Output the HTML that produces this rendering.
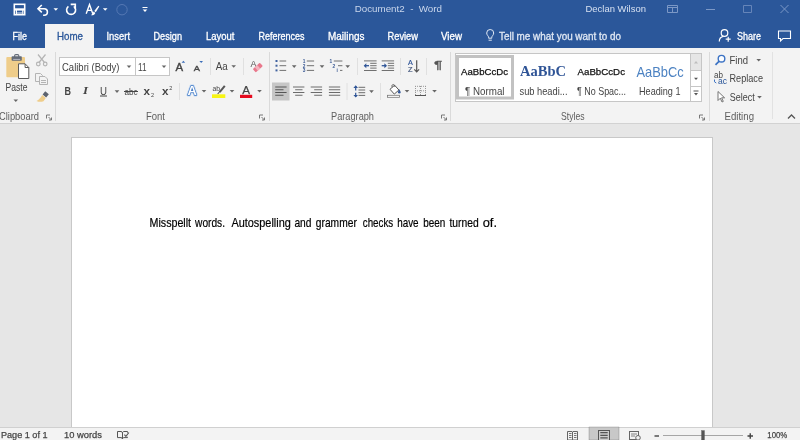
<!DOCTYPE html>
<html lang="en">
<head>
<meta charset="utf-8">
<title>Document2 - Word</title>
<style>
html,body{margin:0;padding:0;}
body{width:800px;height:440px;overflow:hidden;position:relative;background:#e6e6e6;font-family:"Liberation Sans",sans-serif;}
#titlebar{position:absolute;left:0;top:0;width:800px;height:48px;background:#2b579a;}
#hometab{position:absolute;left:45px;top:24px;width:49px;height:24px;background:#f3f3f3;}
#ribbon{position:absolute;left:0;top:48px;width:800px;height:75px;background:#f3f3f3;border-bottom:1px solid #d2d2d2;}
#docarea{position:absolute;left:0;top:124px;width:800px;height:303px;background:#e6e6e6;}
#page{position:absolute;left:71px;top:137px;width:640px;height:300px;background:#fff;border:1px solid #c8c8c8;border-bottom:none;}
#statusbar{position:absolute;left:0;top:427px;width:800px;height:13px;background:#f3f3f3;border-top:1px solid #d0d0d0;box-sizing:border-box;}
#ov{position:absolute;left:0;top:0;will-change:transform;}
svg text{font-family:"Liberation Sans",sans-serif;}
svg text.serif{font-family:"Liberation Serif",serif;}
.sep{stroke:#dadada;stroke-width:1;}
.t11{font-size:11px;}
</style>
</head>
<body>
<div id="titlebar"></div>
<div id="hometab"></div>
<div id="ribbon"></div>
<div id="docarea"></div>
<div id="page"></div>
<div id="statusbar"></div>
<svg id="ov" width="800" height="440" viewBox="0 0 800 440">
<defs>
<path id="dd" d="M0.200 0h4.600l-2.300 2.600z"/>
<g id="launcher" fill="none" stroke="#777" stroke-width="1"><path d="M0.5 4V0.5H4"/><path d="M2.5 2.5L5.5 5.5M5.5 3V5.5H3"/></g>
</defs>
<g id="g-title">
<!-- save icon -->
<g>
<rect x="14.300" y="4.300" width="10.400" height="10.400" fill="none" stroke="#fff" stroke-width="1.600"/>
<rect x="14" y="8.300" width="11" height="2.300" fill="#fff"/>
<path d="M16.400 10v4.500M22.800 10v4.500" stroke="#fff" stroke-width="1.200"/>
<rect x="17" y="12" width="5.200" height="2.200" fill="#fff" opacity=".450"/>
</g>
<!-- undo -->
<g fill="none" stroke="#fff" stroke-width="1.600" transform="translate(0 .7)">
<path d="M41.800 4.300L38 8l3.800 3.700"/>
<path d="M38.500 8h5.600a3.300 3.300 0 0 1 0 6.600h-1"/>
</g>
<use href="#dd" x="53.300" y="8.200" fill="#fff"/>
<!-- redo -->
<g fill="none" stroke="#fff" stroke-width="1.600" transform="translate(.2 .5)">
<path d="M68.200 5.800a4.500 4.500 0 1 0 5.400 0"/>
<path d="M70.500 3.900h4.600v4.600"/>
</g>
<!-- A brush -->
<g fill="none" stroke="#fff" stroke-width="1.400">
<path d="M86.200 13.700L89.500 4.600L92.800 13.700M87.500 10.400h4"/>
</g>
<path d="M98.300 5.800l-4 5.200 1.500 1.200 3.500-5.600z" fill="#fff"/>
<path d="M93.700 11.600l1.600 1.300c-.5 1.700-2 2.500-4.300 2.300 1.400-.9 1.800-2.300 2.700-3.600z" fill="#fff"/>
<use href="#dd" x="102.700" y="8.200" fill="#fff"/>
<circle cx="122" cy="9.700" r="5.200" fill="none" stroke="#5578b3" stroke-width="1"/>
<path d="M142.5 7.5h5" stroke="#fff" stroke-width="1" fill="none"/>
<use href="#dd" x="142.5" y="9.5" fill="#fff"/>
<text y="12.300" font-size="9.800" fill="#c9d6ec" xml:space="preserve"><tspan x="354.700" textLength="50" lengthAdjust="spacingAndGlyphs">Document2</tspan><tspan x="407.600"> - </tspan><tspan x="418.700" textLength="23.300" lengthAdjust="spacingAndGlyphs">Word</tspan></text>
<text x="585.500" y="12.300" font-size="9.800" fill="#d6e0f1" textLength="60.400" lengthAdjust="spacingAndGlyphs">Declan Wilson</text>
<!-- ribbon display -->
<g fill="none" stroke="#7c98c6" stroke-width="1">
<path d="M667.5 5.5h10v7h-10z M667.5 7.5h10 M672.5 7.5v5"/>
</g>
<path d="M706 9.5h9" stroke="#7c98c6" stroke-width="1"/>
<path d="M743.5 5.5h8v7h-8z" fill="none" stroke="#6685b9" stroke-width="1"/>
<path d="M780.5 5L788.5 13M788.5 5L780.5 13" fill="none" stroke="#7c98c6" stroke-width="1"/>
</g>
<g id="g-tabs" font-size="10.200" stroke-width=".300">
<text x="12.5" y="39.600" fill="#fff" stroke="#fff" textLength="14.5" lengthAdjust="spacingAndGlyphs">File</text>
<text x="57" y="39.600" fill="#2b579a" stroke="#2b579a" textLength="26" lengthAdjust="spacingAndGlyphs">Home</text>
<text x="106.5" y="39.600" fill="#fff" stroke="#fff" textLength="23.5" lengthAdjust="spacingAndGlyphs">Insert</text>
<text x="153.5" y="39.600" fill="#fff" stroke="#fff" textLength="28.5" lengthAdjust="spacingAndGlyphs">Design</text>
<text x="206" y="39.600" fill="#fff" stroke="#fff" textLength="28.5" lengthAdjust="spacingAndGlyphs">Layout</text>
<text x="258.5" y="39.600" fill="#fff" stroke="#fff" textLength="46" lengthAdjust="spacingAndGlyphs">References</text>
<text x="328" y="39.600" fill="#fff" stroke="#fff" textLength="36.5" lengthAdjust="spacingAndGlyphs">Mailings</text>
<text x="387.5" y="39.600" fill="#fff" stroke="#fff" textLength="30.5" lengthAdjust="spacingAndGlyphs">Review</text>
<text x="441" y="39.600" fill="#fff" stroke="#fff" textLength="21" lengthAdjust="spacingAndGlyphs">View</text>
<!-- bulb -->
<g fill="none" stroke="#e3eaf5" stroke-width="1">
<path d="M488.600 38.200v-1c0-1.200-1.900-2.100-1.900-4.200a3.500 3.500 0 0 1 7 0c0 2.100-1.900 3-1.900 4.200v1z"/>
<path d="M488.600 40.200h3.200"/>
</g>
<text x="499" y="39.600" fill="#dfe7f3" stroke="#dfe7f3" textLength="122" lengthAdjust="spacingAndGlyphs">Tell me what you want to do</text>
<!-- share -->
<g fill="none" stroke="#fff" stroke-width="1.200">
<circle cx="724.500" cy="33" r="3.300"/>
<path d="M719.300 41.500c0-3 1.600-4.800 4.200-5.200"/>
<path d="M725.700 39.200h5M728.200 36.700v5"/>
</g>
<text x="737" y="39.600" fill="#fff" stroke="#fff" textLength="24" lengthAdjust="spacingAndGlyphs">Share</text>
<path d="M778.500 31h12v7.500h-7.500l-2.500 2.500v-2.500h-2z" fill="none" stroke="#fff" stroke-width="1.1"/>
</g>
<g id="g-ribbon" font-size="10.300">
<!-- group separators -->
<path class="sep" d="M55.500 52v69M269.500 52v69M450.500 52v69M709.500 52v69"/>
<path d="M772.500 52v67" stroke="#e2e2e2" stroke-width="1"/>
<!-- small separators -->
<path stroke="#e0e0e0" stroke-width="1" d="M210.500 58v17M243.500 58v17M179.500 83v17M357.500 58v17M400.500 58v17M426.500 58v17M347 83v17M380.500 83v17"/>
<!-- group labels -->
<g fill="#5e5e5e">
<text x="-1" y="119.500" textLength="40" lengthAdjust="spacingAndGlyphs">Clipboard</text>
<text x="146" y="119.500" textLength="19" lengthAdjust="spacingAndGlyphs">Font</text>
<text x="331" y="119.500" textLength="43" lengthAdjust="spacingAndGlyphs">Paragraph</text>
<text x="561" y="119.500" textLength="23.500" lengthAdjust="spacingAndGlyphs">Styles</text>
<text x="724.500" y="119.500" textLength="29.500" lengthAdjust="spacingAndGlyphs">Editing</text>
</g>
<use href="#launcher" x="46" y="114.500"/>
<use href="#launcher" x="259" y="114.500"/>
<use href="#launcher" x="441" y="114.500"/>
<use href="#launcher" x="699" y="114.500"/>
<path d="M788 118.500l3.500-3.500l3.500 3.500" fill="none" stroke="#555" stroke-width="1.300"/>

<!-- CLIPBOARD -->
<g id="paste">
<rect x="6.300" y="57" width="18.700" height="20.300" rx="1" fill="#efcd8a"/>
<rect x="11.600" y="56.200" width="10.200" height="4.600" rx=".800" fill="#646b78"/>
<rect x="14.600" y="54.600" width="4.200" height="3" rx="1.200" fill="none" stroke="#646b78" stroke-width="1.100"/>
<path d="M13.200 59.400h7" stroke="#c9ccd3" stroke-width=".800"/>
<path d="M18.500 63.800h6.600l3.700 3.700v11h-10.300z" fill="#fff" stroke="#5a5a5a" stroke-width="1"/>
<path d="M25.100 63.800v3.700h3.700" fill="none" stroke="#5a5a5a" stroke-width="1"/>
</g>
<text x="5.500" y="91" fill="#444" textLength="22" lengthAdjust="spacingAndGlyphs">Paste</text>
<use href="#dd" x="13.300" y="99.400" fill="#666"/>
<!-- scissors (disabled) -->
<g fill="none" stroke="#b4b4b4" stroke-width="1.200">
<path d="M38 54.500l6.500 8M45.500 54.500l-6.500 8"/>
<circle cx="38.300" cy="64" r="1.800"/><circle cx="45.200" cy="64" r="1.800"/>
</g>
<!-- copy (disabled) -->
<g fill="#f3f3f3" stroke="#b4b4b4" stroke-width="1">
<path d="M35.500 73.500h5l2 2v6h-7z"/>
<path d="M39.500 76.500h5.500l2.500 2.500v5.500h-8z"/>
<path d="M41 80.500h5M41 82.500h5" />
</g>
<!-- format painter -->
<g>
<path d="M45.200 91.300l3.600 2.900-2.600 3.200-3.600-2.900z" fill="#5d636e"/>
<path d="M42.200 95l3.600 2.900-2.300 3.300c-2.200 .9-4.700 .9-7-.2 2.400-1.200 4.200-3.200 5.700-6z" fill="#efcd8a"/>
</g>

<!-- FONT -->
<rect x="59.500" y="57.500" width="76" height="18" fill="#fff" stroke="#c6c6c6"/>
<rect x="135.500" y="57.500" width="34" height="18" fill="#fff" stroke="#c6c6c6"/>
<text x="62" y="70.500" fill="#444" textLength="57.500" lengthAdjust="spacingAndGlyphs">Calibri (Body)</text>
<use href="#dd" x="126.500" y="65.500" fill="#666"/>
<text x="138" y="70.500" fill="#444" textLength="8.500" lengthAdjust="spacingAndGlyphs">11</text>
<use href="#dd" x="161.500" y="65.500" fill="#666"/>
<!-- grow / shrink -->
<text x="175.400" y="70.700" font-size="10.300" fill="#444" stroke="#444" stroke-width=".350" textLength="7.600" lengthAdjust="spacingAndGlyphs">A</text>
<path d="M181.600 62.700h3.600l-1.800-1.900z" fill="#3b6db8"/>
<text x="193.800" y="70.700" font-size="7.800" fill="#444" stroke="#444" stroke-width=".350" textLength="6.200" lengthAdjust="spacingAndGlyphs">A</text>
<path d="M199.400 61h3.600l-1.800 1.900z" fill="#3b6db8"/>
<text x="215.700" y="69.800" font-size="10.500" fill="#444" textLength="12" lengthAdjust="spacingAndGlyphs">Aa</text>
<use href="#dd" x="231.200" y="65.200" fill="#666"/>
<!-- clear formatting -->
<text x="250.600" y="67.300" font-size="9.200" fill="#555" textLength="6" lengthAdjust="spacingAndGlyphs">A</text>
<g transform="rotate(-42 257.800 67.600)">
<rect x="253" y="65.300" width="9.600" height="4.600" rx="1" fill="#e9788c"/>
<rect x="255.800" y="65.300" width="3.200" height="4.600" fill="#f3b3be"/>
</g>
<!-- row 2 -->
<text x="64.500" y="95" font-size="10.500" font-weight="bold" fill="#444" textLength="6.500" lengthAdjust="spacingAndGlyphs">B</text>
<text x="83" y="94.300" font-size="11" font-style="italic" font-weight="bold" class="serif" fill="#444" textLength="5" lengthAdjust="spacingAndGlyphs">I</text>
<text x="100" y="94.500" font-size="10.500" fill="#444" textLength="7" lengthAdjust="spacingAndGlyphs">U</text>
<path d="M100 96h7" stroke="#444" stroke-width="1"/>
<use href="#dd" x="114.500" y="90.300" fill="#666"/>
<text x="124.500" y="94.500" font-size="9.500" fill="#444" textLength="13" lengthAdjust="spacingAndGlyphs">abc</text>
<path d="M124 91.500h14" stroke="#444" stroke-width="1"/>
<text x="143.500" y="94.500" font-size="11" font-weight="bold" fill="#444" textLength="6.500" lengthAdjust="spacingAndGlyphs">x</text>
<text x="151" y="96.500" font-size="5.500" fill="#444">2</text>
<text x="162" y="94.500" font-size="11" font-weight="bold" fill="#444" textLength="6.500" lengthAdjust="spacingAndGlyphs">x</text>
<text x="169.300" y="90" font-size="5.500" fill="#444">2</text>
<!-- text effects A -->
<text x="187.400" y="95.400" font-size="12.800" font-weight="bold" fill="#fff" stroke="#c3d8f2" stroke-width="2.800" paint-order="stroke" stroke-linejoin="round">A</text>
<text x="187.400" y="95.400" font-size="12.800" font-weight="bold" fill="#fff" stroke="#3f78c4" stroke-width="1.300" paint-order="stroke" stroke-linejoin="round">A</text>
<use href="#dd" x="201.500" y="90" fill="#666"/>
<!-- highlight -->
<text x="212.500" y="90.700" font-size="7.500" fill="#444" textLength="7.500" lengthAdjust="spacingAndGlyphs">ab</text>
<path d="M224.800 85.800l-5.200 6.400" stroke="#555" stroke-width="2" fill="none"/>
<path d="M219.900 91.200l-2.300 2.600 1-.2z" fill="#555" stroke="#555" stroke-width=".600"/>
<rect x="212" y="94.300" width="13.300" height="3.700" fill="#f7f414"/>
<use href="#dd" x="229.500" y="90" fill="#666"/>
<!-- font colour -->
<text x="242.200" y="94.100" font-size="10.500" fill="#444" stroke="#444" stroke-width=".250" textLength="7.800" lengthAdjust="spacingAndGlyphs">A</text>
<rect x="240" y="94.800" width="12.200" height="3.200" fill="#e60a1e"/>
<use href="#dd" x="257" y="90" fill="#666"/>

<!-- PARAGRAPH row1 -->
<g id="bullets">
<rect x="275.500" y="60" width="2" height="2" fill="#40629f"/><rect x="275.500" y="64.700" width="2" height="2" fill="#40629f"/><rect x="275.500" y="69.400" width="2" height="2" fill="#40629f"/>
<path d="M279.500 61h6.700M279.500 65.700h6.700M279.500 70.400h6.700" stroke="#707070" stroke-width="1"/>
</g>
<use href="#dd" x="291.700" y="65.300" fill="#666"/>
<g id="numbering">
<text x="302.800" y="62.800" font-size="4.800" font-weight="bold" fill="#3b5a94">1</text>
<text x="302.800" y="67.500" font-size="4.800" font-weight="bold" fill="#3b5a94">2</text>
<text x="302.800" y="72.200" font-size="4.800" font-weight="bold" fill="#3b5a94">3</text>
<path d="M306.800 61h7.300M306.800 65.700h7.300M306.800 70.400h7.300" stroke="#707070" stroke-width="1"/>
</g>
<use href="#dd" x="319.500" y="65.300" fill="#666"/>
<g id="multilevel">
<text x="329.500" y="62.800" font-size="4.800" font-weight="bold" fill="#3b5a94">1</text>
<text x="332.600" y="67.500" font-size="4.800" font-weight="bold" fill="#3b5a94">2</text>
<text x="336.600" y="72.200" font-size="4.800" font-weight="bold" fill="#3b5a94">i</text>
<path d="M333.800 61h8.600M338 65.700h4.400M340 70.400h2.400" stroke="#707070" stroke-width="1"/>
</g>
<use href="#dd" x="345.200" y="65.300" fill="#666"/>
<g id="outdent">
<path d="M364 60.900h12.600M370.200 63.300h6.400M370.200 65.700h6.400M370.200 68.100h6.400M364 70.500h12.600" stroke="#707070" stroke-width="1"/>
<path d="M369 65.700h-4.300" stroke="#2f5597" stroke-width="1.300" fill="none"/>
<path d="M363.700 65.700l2.600-2.500v5z" fill="#2f5597"/>
</g>
<g id="indent">
<path d="M381.700 60.900h12.400M387.800 63.300h6.300M387.800 65.700h6.300M387.800 68.100h6.300M381.700 70.500h12.400" stroke="#707070" stroke-width="1"/>
<path d="M381.700 65.700h4.300" stroke="#2f5597" stroke-width="1.300" fill="none"/>
<path d="M387 65.700l-2.600-2.500v5z" fill="#2f5597"/>
</g>
<g id="sort">
<text x="408" y="65.400" font-size="7.200" fill="#2f5597" stroke="#2f5597" stroke-width=".200" textLength="4.800" lengthAdjust="spacingAndGlyphs">A</text>
<text x="408.100" y="71.900" font-size="6.800" fill="#44587f" stroke="#44587f" stroke-width=".200" textLength="4.500" lengthAdjust="spacingAndGlyphs">Z</text>
<path d="M416.700 60.200v11.400M414.300 69.300l2.400 2.500 2.400-2.500" stroke="#555" stroke-width="1.200" fill="none"/>
</g>
<text x="434" y="69.300" font-size="11.200" fill="#555" stroke="#555" stroke-width=".300" textLength="8.300" lengthAdjust="spacingAndGlyphs">¶</text>
<!-- row2 -->
<rect x="272" y="82.500" width="17.500" height="18" fill="#c6c6c6"/>
<path d="M275.200 87h11.400M275.200 89.750h8.300M275.200 92.500h11.400M275.200 95.250h8.300" stroke="#555" stroke-width="1.100"/>
<path d="M293 87h11.400M295.200 89.750h7.300M293 92.500h11.400M295.200 95.250h7.300" stroke="#6c6c6c" stroke-width="1"/>
<path d="M310.700 87h11.400M314.200 89.750h7.900M310.700 92.500h11.400M314.200 95.250h7.900" stroke="#6c6c6c" stroke-width="1"/>
<path d="M328.900 87h11.300M328.900 89.750h11.300M328.900 92.500h11.300M328.900 95.250h11.300" stroke="#6c6c6c" stroke-width="1"/>
<g id="linespacing">
<path d="M355.700 86v4.500M355.700 92.700v4.300" stroke="#2f5597" stroke-width="1.200" fill="none"/>
<path d="M355.700 85.300l2.300 2.600h-4.600zM355.700 97.500l2.300-2.600h-4.600z" fill="#2f5597"/>
<path d="M358.500 87.300h6.700M358.500 90h6.700M358.500 92.700h6.700M358.500 95.400h6.700" stroke="#6c6c6c" stroke-width="1"/>
</g>
<use href="#dd" x="369" y="90.300" fill="#666"/>
<g id="shading">
<path d="M390 89.300l4.600-4.100 4.300 4.800-4.600 4.100z" fill="#fff" stroke="#555" stroke-width="1"/>
<path d="M392.300 87.200c-.8-1.500-.2-2.600 .9-2.600s1.600 .9 1.600 2.300" fill="none" stroke="#555" stroke-width=".900"/>
<path d="M399.300 89.300c.9 1.300 1.300 2.300 1.300 3a1.300 1.300 0 0 1-2.600 0c0-.7 .5-1.700 1.300-3z" fill="#2f5597"/>
<rect x="387.500" y="95.300" width="12" height="2" fill="#fff" stroke="#777" stroke-width=".800"/>
</g>
<use href="#dd" x="404.500" y="90" fill="#666"/>
<g id="borders" stroke="#999" stroke-width="1" fill="none">
<path stroke-dasharray="1 1" d="M415 86.300h11M415 90.800h11M415.500 86v9.500M420.500 86v9.500M425.500 86v9.500"/>
<path d="M415 95.500h11" stroke="#555"/>
</g>
<use href="#dd" x="432" y="90" fill="#666"/>

<!-- STYLES -->
<rect x="455.500" y="53.500" width="246" height="48" fill="#fff" stroke="#c6c6c6"/>
<rect x="457.500" y="56.500" width="55" height="41.500" fill="none" stroke="#c2c2c2" stroke-width="3"/>
<text x="461" y="75" font-size="9.800" fill="#111" stroke="#111" stroke-width=".250" textLength="47" lengthAdjust="spacingAndGlyphs">AaBbCcDc</text>
<text x="465" y="94.500" fill="#444" textLength="39.500" lengthAdjust="spacingAndGlyphs">¶ Normal</text>
<text x="520" y="75.500" font-size="14.500" font-weight="bold" class="serif" fill="#2f5496" textLength="46" lengthAdjust="spacingAndGlyphs">AaBbC</text>
<text x="519.500" y="94.500" fill="#444" textLength="48" lengthAdjust="spacingAndGlyphs">sub headi...</text>
<text x="577.500" y="75" font-size="9.800" fill="#111" stroke="#111" stroke-width=".250" textLength="47.500" lengthAdjust="spacingAndGlyphs">AaBbCcDc</text>
<text x="577" y="94.500" fill="#444" textLength="49" lengthAdjust="spacingAndGlyphs">¶ No Spac...</text>
<text x="636.500" y="76.500" font-size="14.800" fill="#4c82c2" textLength="47.200" lengthAdjust="spacingAndGlyphs">AaBbCc</text>
<text x="639" y="94.500" fill="#444" textLength="41.500" lengthAdjust="spacingAndGlyphs">Heading 1</text>
<rect x="690.500" y="53.500" width="11" height="17" fill="#e6e6e6" stroke="#c6c6c6"/>
<rect x="690.500" y="70.500" width="11" height="16" fill="#fff" stroke="#c6c6c6"/>
<rect x="690.500" y="86.500" width="11" height="15" fill="#fff" stroke="#c6c6c6"/>
<path d="M694 63.500h4l-2-2.500z" fill="#bdbdbd"/>
<path d="M694 77.700h4l-2 2.400z" fill="#555"/>
<path d="M693.500 91h5" stroke="#555" stroke-width="1"/>
<path d="M694 93h4l-2 2.400z" fill="#555"/>

<!-- EDITING -->
<g fill="#fbfdff" stroke="#3b72c4" stroke-width="1.400">
<circle cx="721.500" cy="58.700" r="3.300"/>
<path d="M719.200 61.200l-3.700 3.700" stroke-width="1.700"/>
</g>
<text x="729.500" y="63.900" fill="#444" textLength="18.500" lengthAdjust="spacingAndGlyphs">Find</text>
<use href="#dd" x="756.200" y="59" fill="#666"/>
<g>
<text x="714" y="78" font-size="8.500" fill="#444" textLength="9" lengthAdjust="spacingAndGlyphs">ab</text>
<text x="718" y="84" font-size="8.500" fill="#2b579a" textLength="9" lengthAdjust="spacingAndGlyphs">ac</text>
<path d="M714.500 79.500v2.300l1.800 1.200" stroke="#3b72c4" stroke-width="1" fill="none"/>
</g>
<text x="729.500" y="82.400" fill="#444" textLength="33.500" lengthAdjust="spacingAndGlyphs">Replace</text>
<path d="M718 91.500v9l2.300-2.300 1.700 3.800 1.300-.600-1.700-3.600h3z" fill="#fff" stroke="#666" stroke-width=".900"/>
<text x="729.800" y="100.600" fill="#444" textLength="25" lengthAdjust="spacingAndGlyphs">Select</text>
<use href="#dd" x="757" y="96" fill="#666"/>
</g>
<g id="g-doc">
<text y="226.500" font-size="12.400" fill="#000" stroke="#000" stroke-width=".200"><tspan x="149.5" textLength="41.6" lengthAdjust="spacingAndGlyphs">Misspellt</tspan> <tspan x="195.1" textLength="29.9" lengthAdjust="spacingAndGlyphs">words.</tspan> <tspan x="231.4" textLength="59.4" lengthAdjust="spacingAndGlyphs">Autospelling</tspan> <tspan x="294.4" textLength="17.1" lengthAdjust="spacingAndGlyphs">and</tspan> <tspan x="315.8" textLength="41.0" lengthAdjust="spacingAndGlyphs">grammer</tspan> <tspan x="362.8" textLength="30.4" lengthAdjust="spacingAndGlyphs">checks</tspan> <tspan x="397.2" textLength="21.4" lengthAdjust="spacingAndGlyphs">have</tspan> <tspan x="423.3" textLength="22.1" lengthAdjust="spacingAndGlyphs">been</tspan> <tspan x="449.5" textLength="29.2" lengthAdjust="spacingAndGlyphs">turned</tspan> <tspan x="482.7" textLength="14.3" lengthAdjust="spacingAndGlyphs">of.</tspan></text>
</g>
<g id="g-status" font-size="9.500" fill="#444" stroke="#444" stroke-width=".250">
<text x="1" y="437.800" textLength="46.500" lengthAdjust="spacingAndGlyphs">Page 1 of 1</text>
<text x="64" y="437.800" textLength="38" lengthAdjust="spacingAndGlyphs">10 words</text>
<!-- proofing -->
<g fill="none" stroke="#555" stroke-width="1">
<path d="M117.500 431.500h3.500c.800 0 1.500.600 1.500 1.400v6.100c0-.800-.700-1.400-1.500-1.400h-3.500z"/>
<path d="M122.500 432.900c0-.800.700-1.400 1.500-1.400h3.500v1.200M127.500 436.800v.800h-3.500c-.800 0-1.500.600-1.500 1.400"/>
<path d="M124.400 434.700l1.500 1.600 3-3.800" stroke-width="1.100"/>
</g>
<!-- read mode -->
<g fill="none" stroke="#666" stroke-width="1">
<path d="M567.500 431.500h4.500l.500.500.500-.500h4.500v8.500h-10z M572.500 432v8"/>
<path d="M569 433.500h2.500M569 435.500h2.500M569 437.500h2.500M574 433.500h2.500M574 435.500h2.500M574 437.500h2.500" stroke-width="1" stroke="#777"/>
</g>
<rect x="589" y="427" width="30" height="13" fill="#c8c8c8"/>
<g fill="none" stroke="#555" stroke-width="1">
<rect x="598.500" y="430.500" width="11" height="10" fill="#cdcdcd"/>
<path d="M600.300 432.700h7.400M600.300 435.300h7.400M600.300 437.900h7.400" stroke-width="1.300"/>
</g>
<g fill="none" stroke="#666" stroke-width="1">
<rect x="629.500" y="431.500" width="9" height="8"/>
<path d="M631 434h6M631 436h4" stroke-width=".800"/>
<circle cx="638" cy="437.800" r="2.300" fill="#f3f3f3"/>
</g>
<path d="M654.500 436h4.500" stroke="#444" stroke-width="1.400"/>
<path d="M663 435.500h80" stroke="#a6a6a6" stroke-width="1"/>
<rect x="701.500" y="430.500" width="3" height="9.500" fill="#555"/>
<path d="M747.500 436h5.500M750.250 433.200v5.600" stroke="#444" stroke-width="1.400"/>
<text x="767.300" y="437.800" textLength="20" lengthAdjust="spacingAndGlyphs">100%</text>
</g>
</svg>
</body>
</html>
